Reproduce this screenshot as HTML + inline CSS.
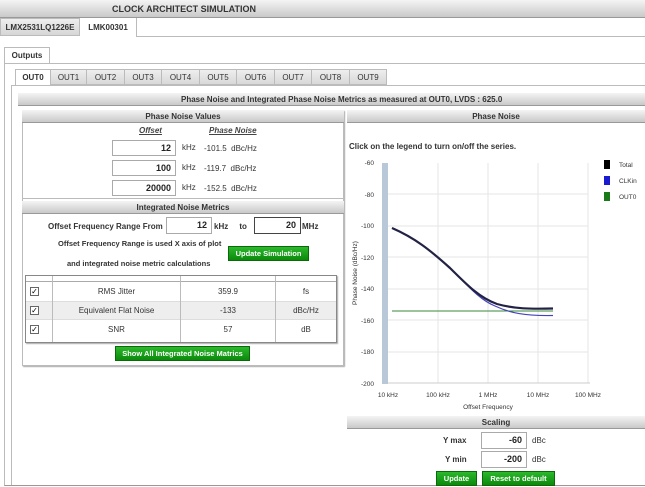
<!DOCTYPE html>
<html><head><style>
*{margin:0;padding:0;box-sizing:border-box}
body{width:645px;height:487px;position:relative;overflow:hidden;background:#fff;font-family:"Liberation Sans",Arial,sans-serif;font-size:8px;color:#333}
.a{position:absolute}
.bar{position:absolute;background:linear-gradient(#f4f4f4,#c9c9c9);border-bottom:1px solid #999;text-align:center;font-weight:bold;color:#333;font-size:8px}
.tab{position:absolute;top:69px;height:16px;background:linear-gradient(#eee,#d8d8d8);border:1px solid #bbb;text-align:center;line-height:15px;font-size:8px;color:#333}
.inp{position:absolute;background:#fff;border:1px solid #aaa;text-align:right;padding-right:4px;font-weight:bold;font-size:9px;color:#222}
.btn{position:absolute;background:linear-gradient(#2cb82c,#0a8a0a);border:1px solid #0a6a0a;color:#fff;font-weight:bold;text-align:center;font-size:7.5px}
.b{font-weight:bold}
.cb{position:absolute;left:30px;width:9px;height:9px;border:1px solid #666;background:#fff;font-size:8px;line-height:7px;text-align:center;color:#000}
</style></head><body>
<div class="bar" style="left:0;top:0;width:645px;height:18px;line-height:18px"><span class="a" style="left:112px;top:0;font-size:9px">CLOCK ARCHITECT SIMULATION</span></div>
<div class="a" style="left:0;top:18px;width:80px;height:18px;background:linear-gradient(#eee,#d6d6d6);border:1px solid #bbb;text-align:center;line-height:17px;font-weight:bold;font-size:8px">LMX2531LQ1226E</div>
<div class="a" style="left:80px;top:18px;width:57px;height:19px;background:#fff;border-right:1px solid #bbb;text-align:center;line-height:19px;font-weight:bold;font-size:8px">LMK00301</div>
<div class="a" style="left:137px;top:36px;width:508px;height:1px;background:#bbb"></div>
<div class="a" style="left:4px;top:47px;width:46px;height:17px;background:#fff;border:1px solid #bbb;border-bottom:none;text-align:center;line-height:16px;font-weight:bold">Outputs</div>
<div class="a" style="left:4px;top:63px;width:641px;height:423px;border:1px solid #bbb;border-right:none;border-bottom:1px solid #999"></div>
<div class="a" style="left:11px;top:85px;width:634px;height:400px;border-left:1px solid #bbb;border-top:1px solid #bbb"></div>
<div class="tab" style="left:15px;width:36px;background:#fff;border-bottom:none;font-weight:bold">OUT0</div>
<div class="tab" style="left:50px;width:37px">OUT1</div>
<div class="tab" style="left:86px;width:39px">OUT2</div>
<div class="tab" style="left:124px;width:38px">OUT3</div>
<div class="tab" style="left:161px;width:39px">OUT4</div>
<div class="tab" style="left:199px;width:38px">OUT5</div>
<div class="tab" style="left:236px;width:39px">OUT6</div>
<div class="tab" style="left:274px;width:38px">OUT7</div>
<div class="tab" style="left:311px;width:39px">OUT8</div>
<div class="tab" style="left:349px;width:38px">OUT9</div>
<div class="bar" style="left:18px;top:93px;width:627px;height:13px;line-height:13px;text-align:left;padding-left:163px">Phase Noise and Integrated Phase Noise Metrics as measured at OUT0, LVDS : 625.0</div>

<div class="a" style="left:22px;top:110px;width:322px;height:256px;border:1px solid #bbb;box-shadow:1px 1px 1px #aaa"></div>
<div class="bar" style="left:22px;top:110px;width:322px;height:13px;line-height:13px">Phase Noise Values</div>
<div class="a" style="left:139px;top:126px;font-style:italic;text-decoration:underline;font-weight:bold;color:#444">Offset</div>
<div class="a" style="left:209px;top:126px;font-style:italic;text-decoration:underline;font-weight:bold;color:#444">Phase Noise</div>
<div class="inp" style="left:112px;top:140px;width:64px;height:16px;line-height:14px">12</div>
<div class="inp" style="left:112px;top:160px;width:64px;height:16px;line-height:14px">100</div>
<div class="inp" style="left:112px;top:180px;width:64px;height:16px;line-height:14px">20000</div>
<div class="a" style="left:182px;top:143px">kHz</div><div class="a" style="left:204px;top:144px">-101.5 &nbsp;dBc/Hz</div>
<div class="a" style="left:182px;top:163px">kHz</div><div class="a" style="left:204px;top:164px">-119.7 &nbsp;dBc/Hz</div>
<div class="a" style="left:182px;top:183px">kHz</div><div class="a" style="left:204px;top:184px">-152.5 &nbsp;dBc/Hz</div>
<div class="a" style="left:22px;top:198px;width:322px;height:1px;background:#bbb"></div>
<div class="bar" style="left:22px;top:201px;width:322px;height:13px;line-height:13px">Integrated Noise Metrics</div>
<div class="a b" style="left:48px;top:222px">Offset Frequency Range From</div>
<div class="inp" style="left:166px;top:217px;width:46px;height:17px;line-height:15px">12</div>
<div class="a b" style="left:214px;top:222px">kHz &nbsp;&nbsp;&nbsp;&nbsp;to</div>
<div class="inp" style="left:254px;top:217px;width:47px;height:17px;line-height:15px;border:1px solid #444">20</div>
<div class="a b" style="left:302px;top:222px">MHz</div>
<div class="a b" style="left:58px;top:239px;font-size:7.5px">Offset Frequency Range is used X axis of plot</div>
<div class="btn" style="left:228px;top:246px;width:81px;height:15px;line-height:13px">Update Simulation</div>
<div class="a b" style="left:67px;top:259px;font-size:7.5px">and integrated noise metric calculations</div>
<div class="a" style="left:25px;top:275px;width:312px;height:68px;border:1px solid #888;box-shadow:1px 1px 1px #aaa"></div>
<div class="a" style="left:26px;top:281px;width:310px;height:1px;background:#aaa"></div>
<div class="a" style="left:26px;top:301px;width:310px;height:19px;background:#eee;border-top:1px solid #ddd;border-bottom:1px solid #ddd"></div>
<div class="a" style="left:52px;top:276px;width:1px;height:66px;background:#bbb"></div>
<div class="a" style="left:180px;top:276px;width:1px;height:66px;background:#bbb"></div>
<div class="a" style="left:275px;top:276px;width:1px;height:66px;background:#bbb"></div>
<div class="cb" style="top:287px">✓</div>
<div class="cb" style="top:306px">✓</div>
<div class="cb" style="top:325px">✓</div>
<div class="a" style="left:53px;top:287px;width:127px;text-align:center">RMS Jitter</div>
<div class="a" style="left:181px;top:287px;width:94px;text-align:center">359.9</div>
<div class="a" style="left:276px;top:287px;width:60px;text-align:center">fs</div>
<div class="a" style="left:53px;top:306px;width:127px;text-align:center">Equivalent Flat Noise</div>
<div class="a" style="left:181px;top:306px;width:94px;text-align:center">-133</div>
<div class="a" style="left:276px;top:306px;width:60px;text-align:center">dBc/Hz</div>
<div class="a" style="left:53px;top:325px;width:127px;text-align:center">SNR</div>
<div class="a" style="left:181px;top:325px;width:94px;text-align:center">57</div>
<div class="a" style="left:276px;top:325px;width:60px;text-align:center">dB</div>
<div class="btn" style="left:115px;top:346px;width:135px;height:15px;line-height:13px">Show All Integrated Noise Matrics</div>

<div class="bar" style="left:347px;top:110px;width:298px;height:13px;line-height:13px">Phase Noise</div>
<div class="a b" style="left:349px;top:142px">Click on the legend to turn on/off the series.</div>
<svg class="a" style="left:345px;top:155px" width="300" height="260" font-family="Liberation Sans,sans-serif" font-size="6.5" fill="#333">
<g transform="translate(-345,-155)">
<g stroke="#e6e6e6" stroke-width="1">
<line x1="438" y1="163" x2="438" y2="383"/><line x1="488" y1="163" x2="488" y2="383"/><line x1="538" y1="163" x2="538" y2="383"/><line x1="588" y1="163" x2="588" y2="383"/>
<line x1="388" y1="194" x2="588" y2="194"/><line x1="388" y1="226" x2="588" y2="226"/><line x1="388" y1="257" x2="588" y2="257"/><line x1="388" y1="289" x2="588" y2="289"/><line x1="388" y1="320" x2="588" y2="320"/><line x1="388" y1="352" x2="588" y2="352"/>
</g>
<rect x="382" y="163" width="6" height="221" fill="#b9c8d8"/>
<line x1="388" y1="383" x2="590" y2="383" stroke="#ccc"/>
<g text-anchor="end"><text x="374" y="165">-60</text><text x="374" y="197">-80</text><text x="374" y="228">-100</text><text x="374" y="260">-120</text><text x="374" y="291">-140</text><text x="374" y="323">-160</text><text x="374" y="354">-180</text><text x="374" y="386">-200</text></g>
<text transform="translate(357,273) rotate(-90)" text-anchor="middle">Phase Noise (dBc/Hz)</text>
<g text-anchor="middle"><text x="388" y="397">10 kHz</text><text x="438" y="397">100 kHz</text><text x="488" y="397">1 MHz</text><text x="538" y="397">10 MHz</text><text x="588" y="397">100 MHz</text><text x="488" y="409">Offset Frequency</text></g>
<line x1="392" y1="311" x2="553" y2="311" stroke="#3a8a3a" stroke-width="1"/>
<path d="M392,228 C415,238 430,250 450,268 C468,286 480,300 495,306 C510,313 525,316 553,315.5" fill="none" stroke="#4444bb" stroke-width="1.2"/>
<path d="M392,228 C415,238 430,250 450,268 C468,286 480,298 497,304 C515,309 530,309 553,308.5" fill="none" stroke="#222244" stroke-width="2.2"/>
<rect x="604" y="160" width="6" height="9" fill="#000"/><text x="619" y="167">Total</text>
<rect x="604" y="176" width="6" height="9" fill="#1a1ad0"/><text x="619" y="183">CLKin</text>
<rect x="604" y="192" width="6" height="9" fill="#1a7a1a"/><text x="619" y="199">OUT0</text>
</g></svg>
<div class="bar" style="left:347px;top:416px;width:298px;height:13px;line-height:13px">Scaling</div>
<div class="a b" style="left:443px;top:436px;font-size:8px">Y max</div>
<div class="inp" style="left:481px;top:432px;width:46px;height:17px;line-height:15px">-60</div>
<div class="a" style="left:532px;top:436px">dBc</div>
<div class="a b" style="left:445px;top:455px">Y min</div>
<div class="inp" style="left:481px;top:451px;width:46px;height:17px;line-height:15px">-200</div>
<div class="a" style="left:532px;top:455px">dBc</div>
<div class="btn" style="left:436px;top:471px;width:41px;height:15px;line-height:13px">Update</div>
<div class="btn" style="left:482px;top:471px;width:73px;height:15px;line-height:13px">Reset to default</div>
</body></html>
